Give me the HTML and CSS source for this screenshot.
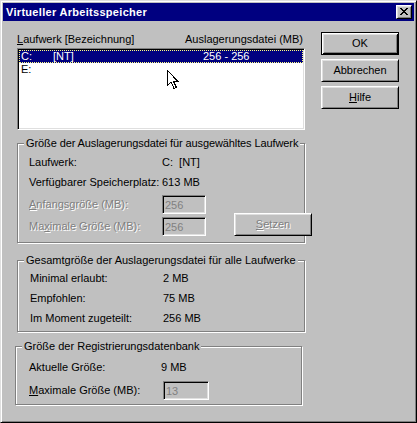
FILE: index.html
```html
<!DOCTYPE html>
<html lang="de">
<head>
<meta charset="utf-8">
<title>Virtueller Arbeitsspeicher</title>
<link rel="stylesheet" href="styles.css">
</head>
<body>
<div class="window">
  <div class="titlebar">
    <span class="title">Virtueller Arbeitsspeicher</span>
    <span class="close-btn">
      <svg width="8" height="7" viewBox="0 0 8 7" shape-rendering="crispEdges"><path fill="#000" d="M0 0h2v1H0z M6 0h2v1H6z M1 1h2v1H1z M5 1h2v1H5z M2 2h4v1H2z M3 3h2v1H3z M2 4h4v1H2z M1 5h2v1H1z M5 5h2v1H5z M0 6h2v1H0z M6 6h2v1H6z"/></svg>
    </span>
  </div>
  <div class="body">
    <div class="main">
      <div class="list-header">
        <span><u>L</u>aufwerk [Bezeichnung]</span>
        <span>Auslagerungsdatei (MB)</span>
      </div>
      <div class="listbox">
        <div class="list-row selected"><span class="c-drive">C:</span><span class="c-label">[NT]</span><span class="c-size">256 - 256</span></div>
        <div class="list-row"><span class="c-drive">E:</span><span class="c-label"></span><span class="c-size"></span></div>
        <svg class="cursor" width="13" height="20" viewBox="0 0 13 20" shape-rendering="crispEdges"><path d="M0.5 0.5 V15.5 L4 12 L7 18.5 L9.5 17.5 L6.5 11.5 H11 Z" fill="#fff" stroke="#000" stroke-width="1" stroke-linejoin="miter"/></svg>
      </div>

      <fieldset class="group g1">
        <legend>Größe der Auslagerungsdatei für ausgewähltes Laufwerk</legend>
        <div class="grid g1-grid">
          <span class="r1 c1">Laufwerk:</span>
          <span class="r1 c2">C:&nbsp; [NT]</span>
          <span class="r2 c1">Verfügbarer Speicherplatz:</span>
          <span class="r2 c2">613 MB</span>
          <span class="r3 c1 tb-label disabled"><u>A</u>nfangsgröße (MB):</span>
          <span class="r3 c2 field">256</span>
          <span class="r4 c1 tb-label disabled">Ma<u>x</u>imale Größe (MB):</span>
          <span class="r4 c2 field">256</span>
          <button class="btn setzen disabled" type="button"><span><u>S</u>etzen</span></button>
        </div>
      </fieldset>

      <fieldset class="group g2">
        <legend>Gesamtgröße der Auslagerungsdatei für alle Laufwerke</legend>
        <div class="grid g2-grid">
          <span>Minimal erlaubt:</span><span>2 MB</span>
          <span>Empfohlen:</span><span>75 MB</span>
          <span>Im Moment zugeteilt:</span><span>256 MB</span>
        </div>
      </fieldset>

      <fieldset class="group g3">
        <legend>Größe der Registrierungsdatenbank</legend>
        <div class="grid g3-grid">
          <span>Aktuelle Größe:</span><span class="val9">9 MB</span>
          <span class="tb-label"><u>M</u>aximale Größe (MB):</span><span class="field wide">13</span>
        </div>
      </fieldset>
    </div>

    <div class="buttons">
      <button class="btn default" type="button">OK</button>
      <button class="btn" type="button">Abbrechen</button>
      <button class="btn" type="button"><span><u>H</u>ilfe</span></button>
    </div>
  </div>
</div>
</body>
</html>
```

FILE: styles.css
```css
* { box-sizing: border-box; }

html, body {
  margin: 0;
  padding: 0;
}

body {
  background: #c0c0c0;
  font-family: "Liberation Sans", Arial, sans-serif;
  font-size: 11px;
  line-height: 13px;
  color: #000;
}

.window {
  width: 417px;
  height: 423px;
  background: #c0c0c0;
  border: 1px solid;
  border-color: #dfdfdf #000 #000 #dfdfdf;
  box-shadow: inset 1px 1px #fff, inset -1px -1px #808080;
  padding: 2px;
}

.titlebar {
  height: 18px;
  background: #000080;
  color: #fff;
  display: flex;
  align-items: center;
  justify-content: space-between;
  padding: 0 2px 0 3px;
}

.title {
  font-weight: bold;
  letter-spacing: 0.3px;
}

.close-btn {
  width: 16px;
  height: 14px;
  background: #c0c0c0;
  border: 1px solid;
  border-color: #fff #000 #000 #fff;
  box-shadow: inset 1px 1px #dfdfdf, inset -1px -1px #808080;
  display: flex;
  align-items: flex-start;
  padding: 2px 0 0 3px;
}

.close-btn svg { display: block; }

.body {
  display: flex;
  align-items: flex-start;
  padding: 11px 0 0 14px;
}

.main {
  width: 288px;
  flex: none;
}

.list-header {
  display: flex;
  justify-content: space-between;
  height: 14px;
  padding: 1px 2px 0 0;
}

.listbox {
  position: relative;
  height: 82px;
  margin-top: 2px;
  background: #fff;
  border: 1px solid;
  border-color: #808080 #fff #fff #808080;
  box-shadow: inset 1px 1px #000, inset -1px -1px #dfdfdf;
  padding: 1px;
}

.list-row {
  display: flex;
  height: 13px;
  padding-left: 2px;
}

.list-row.selected {
  background: #000080;
  color: #fff;
  outline: 1px dotted #ffff80;
  outline-offset: -1px;
}

.c-drive { width: 32px; }
.c-label { width: 150px; }

.cursor {
  position: absolute;
  left: 149px;
  top: 21px;
  display: block;
}

.group {
  margin: 0;
  padding: 0;
  min-width: 0;
  border: 1px solid #808080;
  box-shadow: inset 1px 1px #fff, 1px 1px 0 #fff;
}

.group legend {
  margin-left: 6px;
  padding: 0 2px;
  background: #c0c0c0;
  line-height: 13px;
  white-space: nowrap;
}

.g1 legend { letter-spacing: -0.1px; }

.g1 { margin-top: 7px; }
.g2 { margin-top: 11px; }
.g3 {
  margin-top: 8px;
  margin-left: -2px;
  width: 287px;
}

.grid { display: grid; }

.g1-grid {
  grid-template-columns: 133px 72px 60px;
  grid-template-rows: 20px 19px 22px 19px;
  align-items: start;
  padding: 6px 0 6px 11px;
}

.r1 { grid-row: 1; }
.r2 { grid-row: 2; }
.r3 { grid-row: 3; }
.r4 { grid-row: 4; }
.c1 { grid-column: 1; }
.c2 { grid-column: 2; }

.tb-label { line-height: 19px; }

.disabled {
  color: #808080;
  text-shadow: 1px 1px 0 #fff;
}

.field {
  display: block;
  width: 44px;
  height: 19px;
  border: 1px solid;
  border-color: #808080 #fff #fff #808080;
  box-shadow: inset 1px 1px #000, inset -1px -1px #dfdfdf;
  background: #c0c0c0;
  color: #808080;
  padding-left: 2px;
  line-height: 18px;
}

.field.wide { width: 46px; }

.setzen {
  grid-column: 3;
  grid-row: 3 / span 2;
  align-self: end;
  width: 60px;
}

.g2-grid {
  grid-template-columns: 133px auto;
  grid-auto-rows: 13px;
  row-gap: 7px;
  padding: 5px 0 6px 12px;
}

.g3-grid {
  grid-template-columns: 134px auto;
  grid-template-rows: 13px 19px;
  row-gap: 7px;
  padding: 8px 0 4px 13px;
}

.val9 { margin-left: -2px; }

.g3-grid .tb-label { line-height: 19px; }

.buttons {
  margin-left: 16px;
  display: flex;
  flex-direction: column;
  gap: 4px;
  flex: none;
}

.btn {
  appearance: none;
  width: 78px;
  height: 23px;
  margin: 0;
  padding: 0;
  font-family: "Liberation Sans", Arial, sans-serif;
  font-size: 11px;
  line-height: 13px;
  color: #000;
  background: #c0c0c0;
  border: 1px solid;
  border-color: #fff #000 #000 #fff;
  box-shadow: inset 1px 1px #dfdfdf, inset -1px -1px #808080;
  display: flex;
  align-items: center;
  justify-content: center;
}

.btn.default {
  border-color: #000;
  box-shadow: inset 1px 1px #fff, inset -1px -1px #000, inset 2px 2px #dfdfdf, inset -2px -2px #808080;
}

.btn.disabled {
  color: #808080;
  text-shadow: 1px 1px 0 #fff;
}
```
